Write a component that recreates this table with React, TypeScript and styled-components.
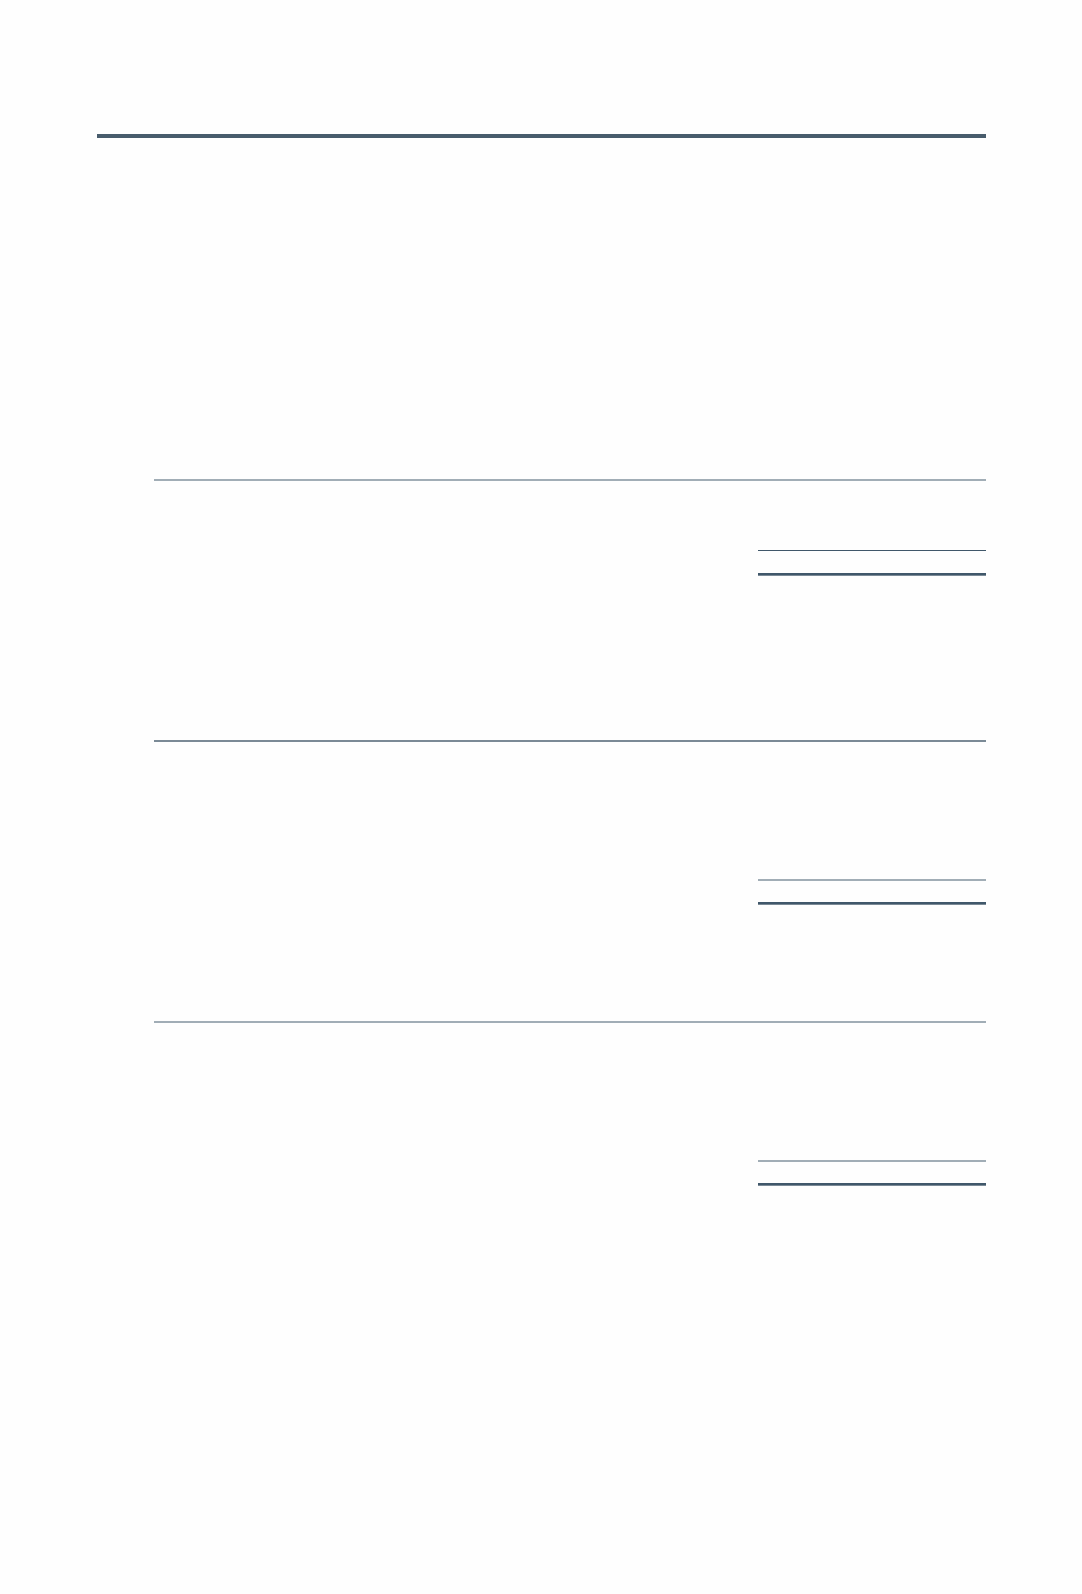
import React from 'react';
import styled, { createGlobalStyle } from 'styled-components';

const GlobalStyle = createGlobalStyle`
    html, body {
        margin: 0;
        padding: 0;
        background: #fefefe;
        font-family: "Liberation Sans", Arial, sans-serif;
    }
`;

const DARK = '#40576a';
const LIGHT = '#a1adb6';
const MID = '#7b8a96';

const Page = styled.div`
    width: 1082px;
    min-height: 1594px;
    box-sizing: border-box;
    padding: 134px 96px 0 97px;
`;

const TopRule = styled.div`
    height: 4px;
    background-color: #485c6c;
`;

const Statement = styled.section`
    margin-left: 57px;
    width: 832px;
`;

const Row = styled.div<{ $height: number }>`
    display: grid;
    grid-template-columns: 604px 114px 114px;
    height: ${(p) => p.$height}px;
`;

/* header cells carry the rule that closes the column headings */
const HeadCell = styled.div<{ $color: string }>`
    border-bottom: 2px solid ${(p) => p.$color};
`;

const Cell = styled.div``;

const AmountCell = styled.div<{ $weight: number; $color: string; $under?: boolean }>`
    border-top: ${(p) => p.$weight}px solid ${(p) => p.$color};
    box-shadow: ${(p) => (p.$under ? `0 1px 0 ${MID}` : 'none')};
`;

type Part = {
    head: number;
    headColor: string;
    body: number;
    subWeight: number;
    subColor: string;
    gap: number;
};

const parts: Part[] = [
    { head: 341, headColor: LIGHT, body: 69, subWeight: 1, subColor: DARK, gap: 22 },
    { head: 165, headColor: MID, body: 137, subWeight: 2, subColor: LIGHT, gap: 21 },
    { head: 117, headColor: LIGHT, body: 137, subWeight: 2, subColor: LIGHT, gap: 21 },
];

const StatementBlock: React.FC<{ part: Part }> = ({ part }) => (
    <Statement>
        <Row $height={part.head + 2}>
            <HeadCell $color={part.headColor} />
            <HeadCell $color={part.headColor} />
            <HeadCell $color={part.headColor} />
        </Row>
        <Row $height={part.body} />
        <Row $height={part.gap + part.subWeight}>
            <Cell />
            <AmountCell $weight={part.subWeight} $color={part.subColor} />
            <AmountCell $weight={part.subWeight} $color={part.subColor} />
        </Row>
        <Row $height={2}>
            <Cell />
            <AmountCell $weight={2} $color={DARK} $under />
            <AmountCell $weight={2} $color={DARK} $under />
        </Row>
    </Statement>
);

const App: React.FC = () => (
    <>
        <GlobalStyle />
        <Page>
            <TopRule />
            {parts.map((part, i) => (
                <StatementBlock key={i} part={part} />
            ))}
        </Page>
    </>
);

export default App;
